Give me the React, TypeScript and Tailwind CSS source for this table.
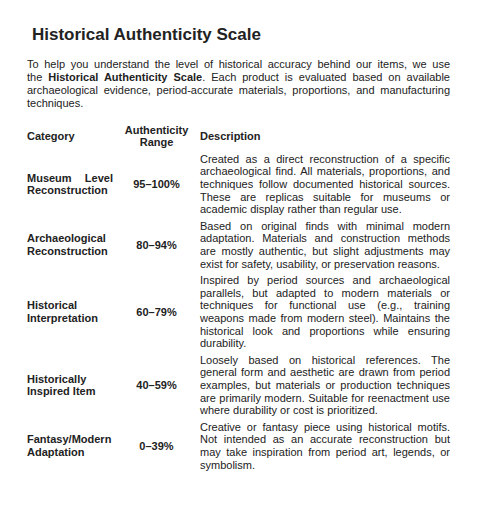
const scaleRows = [
  {
    category: "Museum Level Reconstruction",
    range: "95–100%",
    description:
      "Created as a direct reconstruction of a specific archaeological find. All materials, proportions, and techniques follow documented historical sources. These are replicas suitable for museums or academic display rather than regular use.",
  },
  {
    category: "Archaeological Reconstruction",
    range: "80–94%",
    description:
      "Based on original finds with minimal modern adaptation. Materials and construction methods are mostly authentic, but slight adjustments may exist for safety, usability, or preservation reasons.",
  },
  {
    category: "Historical Interpretation",
    range: "60–79%",
    description:
      "Inspired by period sources and archaeological parallels, but adapted to modern materials or techniques for functional use (e.g., training weapons made from modern steel). Maintains the historical look and proportions while ensuring durability.",
  },
  {
    category: "Historically Inspired Item",
    range: "40–59%",
    description:
      "Loosely based on historical references. The general form and aesthetic are drawn from period examples, but materials or production techniques are primarily modern. Suitable for reenactment use where durability or cost is prioritized.",
  },
  {
    category: "Fantasy/Modern Adaptation",
    range: "0–39%",
    description:
      "Creative or fantasy piece using historical motifs. Not intended as an accurate reconstruction but may take inspiration from period art, legends, or symbolism.",
  },
];

export default function App() {
  return (
    <div className="min-h-screen bg-white pl-[27px] pt-[25px] font-['Liberation_Sans',Arial,sans-serif] text-[#222]">
      <h1 className="pl-[5px] text-[17px] font-bold leading-[19.5px]">
        Historical Authenticity Scale
      </h1>
      <p className="mt-[13px] w-[423px] text-justify text-[11px] leading-[13px] [word-spacing:1.5px]">
        To help you understand the level of historical accuracy behind our
        items, we use the <strong>Historical Authenticity Scale</strong>. Each
        product is evaluated based on available archaeological evidence,
        period-accurate materials, proportions, and manufacturing techniques.
      </p>

      <div className="mt-[14px] grid w-[423px] grid-cols-[86px_87px_250px] items-center gap-y-[3.75px] text-[11px] leading-[12.65px]">
        <div className="font-bold">Category</div>
        <div className="text-center font-bold">
          Authenticity
          <br />
          Range
        </div>
        <div className="font-bold">Description</div>

        {scaleRows.map((row) => (
          <div key={row.range} className="contents">
            <div className="text-justify font-bold">{row.category}</div>
            <div className="text-center font-bold">{row.range}</div>
            <div className="text-justify">{row.description}</div>
          </div>
        ))}
      </div>
    </div>
  );
}
